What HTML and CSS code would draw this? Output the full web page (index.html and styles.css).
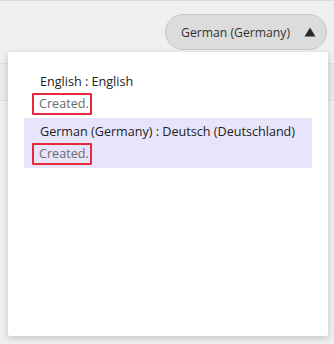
FILE: index.html
```html
<html>
    <head>
        <title>Language</title>
        <link rel="stylesheet" href="styles.css">
    </head>
    <body>
        <div class="topbar"></div>
        <div class="toolbar">
            <button class="lang-button">German (Germany)
                <svg class="arrow" width="12" height="10" viewBox="0 0 12 10"><path d="M6 0.5 L11.5 9.5 L0.5 9.5 Z" fill="#2a2a2a"/></svg>
            </button>
        </div>
        <div class="backdrop-row"></div>
        <div class="menu">
            <ul class="menu-list">
                <li class="menu-item">
                    <div class="item-name">English : English</div>
                    <div class="item-status"><span class="status-mark">Created.</span></div>
                </li>
                <li class="menu-item selected">
                    <div class="item-name">German (Germany) : Deutsch (Deutschland)</div>
                    <div class="item-status"><span class="status-mark">Created.</span></div>
                </li>
            </ul>
        </div>
    </body>
</html>
```
FILE: styles.css
```css
body {
    margin: 0;
    background-color: #efefef;
    font-family: "Open Sans", "Noto Sans", sans-serif;
    font-size: 12.6px;
    color: #222;
    position: relative;
    height: 344px;
    overflow: hidden;
}

.topbar {
    height: 1px;
    background-color: #dadada;
}

.toolbar {
    display: flex;
    justify-content: flex-end;
    padding: 13px 7px 0 0;
}

.lang-button {
    font-family: inherit;
    font-size: 12.2px;
    color: #333;
    height: 36px;
    padding: 0 10px 0 15px;
    border: 1px solid #c9c9c9;
    border-radius: 18px;
    background-color: #dcdcdc;
    display: flex;
    align-items: center;
    gap: 14px;
    white-space: nowrap;
}

.arrow {
    display: block;
}

.backdrop-row {
    position: absolute;
    left: 0;
    right: 0;
    top: 63px;
    height: 36px;
    border-top: 1px solid #dddddd;
    border-bottom: 1px solid #dddddd;
    background-color: #e9e9e9;
}

.menu {
    position: absolute;
    left: 8px;
    top: 52px;
    width: 320px;
    height: 284px;
    background-color: #fff;
    border-radius: 2px;
    box-shadow: 0 2px 6px rgba(0, 0, 0, 0.18);
}

.menu-list {
    list-style: none;
    margin: 0;
    padding: 16px 16px;
}

.menu-item {
    padding: 3px 16px;
    line-height: 22px;
    white-space: nowrap;
}

.menu-item.selected {
    background-color: #e8e5fb;
}

.item-name {
    color: #222;
}

.item-status {
    color: #6b6b6b;
}

.status-mark {
    display: inline-block;
    margin-left: -8px;
    padding: 0 1px 0 5px;
    line-height: 18px;
    border: 2.5px solid #e8283c;
    border-radius: 1px;
}
```
